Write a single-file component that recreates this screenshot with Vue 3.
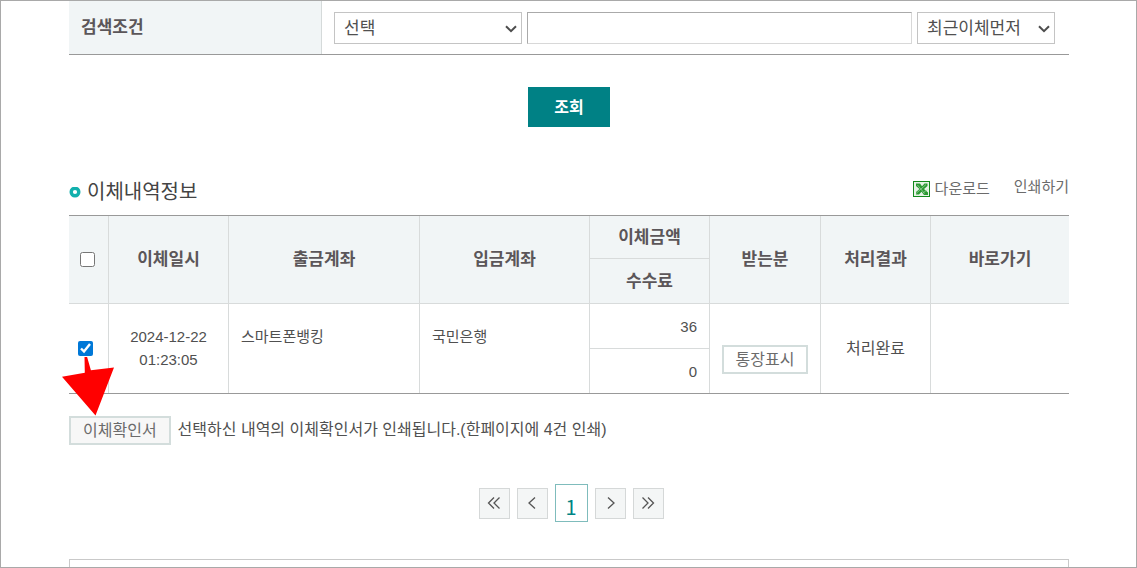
<script setup>
import { ref } from 'vue'

const allChecked = ref(false)
const searchType = ref('선택')
const sortOrder = ref('최근이체먼저')
const keyword = ref('')
const transfers = ref([
  {
    id: 1,
    checked: true,
    date: '2024-12-22',
    time: '01:23:05',
    from: '스마트폰뱅킹',
    to: '국민은행',
    amount: '36',
    fee: '0',
    result: '처리완료'
  }
])
</script>

<template>
  <main class="page">
    <form class="search" @submit.prevent>
      <div class="condition">
        <label class="condition-name" for="search-type">검색조건</label>
        <div class="controls">
          <span class="select type">
            <select id="search-type" v-model="searchType">
              <option>선택</option>
            </select>
            <svg class="chevron" viewBox="0 0 12 8" aria-hidden="true"><path d="M1 1.2 6 6.2 11 1.2" /></svg>
          </span>
          <input v-model="keyword" class="keyword" type="text" aria-label="검색어" />
          <span class="select sort">
            <select v-model="sortOrder" aria-label="정렬">
              <option>최근이체먼저</option>
            </select>
            <svg class="chevron" viewBox="0 0 12 8" aria-hidden="true"><path d="M1 1.2 6 6.2 11 1.2" /></svg>
          </span>
        </div>
      </div>
      <button class="submit" type="submit">조회</button>
    </form>

    <section class="history">
      <header class="history-head">
        <h2>
          <svg class="ring" viewBox="0 0 12 12" aria-hidden="true"><circle cx="6" cy="5" r="3.8" /></svg>
          이체내역정보
        </h2>
        <nav class="tools">
          <a class="download" href="#">
            <svg class="excel" viewBox="0 0 17 16" aria-hidden="true">
              <rect x="0.5" y="0.5" width="16" height="15" fill="#e6f3e6" stroke="#12891b" />
              <path d="M3 2.500h4l2 2.800L11.500 2.500H14.500V5L11 8l4 3.500V14h-4L8.500 10.800 6 13.500H3V11l3.500-3L3 5z" fill="#2b9a32" />
              <path d="M10 12l4.500-3.500M3 12.500l10-9M4.500 4l7 8.500" stroke="#a5d6a7" stroke-width="0.7" fill="none" />
            </svg>
            다운로드
          </a>
          <a class="print" href="#">인쇄하기</a>
        </nav>
      </header>

      <table>
        <colgroup>
          <col class="c-check" /><col class="c-date" /><col class="c-from" /><col class="c-to" />
          <col class="c-amount" /><col class="c-receiver" /><col class="c-result" /><col />
        </colgroup>
        <thead>
          <tr class="upper">
            <th class="check" rowspan="2"><input v-model="allChecked" type="checkbox" aria-label="전체 선택" /></th>
            <th rowspan="2">이체일시</th>
            <th rowspan="2">출금계좌</th>
            <th rowspan="2">입금계좌</th>
            <th>이체금액</th>
            <th rowspan="2">받는분</th>
            <th rowspan="2">처리결과</th>
            <th rowspan="2">바로가기</th>
          </tr>
          <tr><th class="inner">수수료</th></tr>
        </thead>
        <tbody v-for="t in transfers" :key="t.id">
          <tr class="item">
            <td class="check picked" rowspan="2">
              <input v-model="t.checked" type="checkbox" aria-label="이체내역 선택" />
              <svg class="arrow" viewBox="0 0 53 60" aria-hidden="true">
                <path d="M22.500 1h2.600l3.800 13.300L52 11.500 33.500 59.500 0 20.700l22.800-4z" />
              </svg>
            </td>
            <td class="date" rowspan="2">{{ t.date }}<br />{{ t.time }}</td>
            <td class="account" rowspan="2">{{ t.from }}</td>
            <td class="account" rowspan="2">{{ t.to }}</td>
            <td class="number">{{ t.amount }}</td>
            <td class="receiver" rowspan="2"><button class="plain" type="button">통장표시</button></td>
            <td class="result" rowspan="2">{{ t.result }}</td>
            <td rowspan="2"></td>
          </tr>
          <tr><td class="number inner">{{ t.fee }}</td></tr>
        </tbody>
      </table>

      <div class="confirm">
        <button class="plain grey" type="button">이체확인서</button>
        <p>선택하신 내역의 이체확인서가 인쇄됩니다.(한페이지에 4건 인쇄)</p>
      </div>
    </section>

    <nav class="pages" aria-label="페이지">
      <button type="button" aria-label="처음">
        <svg viewBox="0 0 14 14"><path d="M7 1.500 1.500 7 7 12.500M12.500 1.500 7 7l5.500 5.500" /></svg>
      </button>
      <button type="button" aria-label="이전">
        <svg viewBox="0 0 14 14"><path d="M10 1.500 4 7l6 5.500" /></svg>
      </button>
      <a class="current" href="#" aria-current="page">1</a>
      <button type="button" aria-label="다음">
        <svg viewBox="0 0 14 14"><path d="M5 1.500 11 7 5 12.500" /></svg>
      </button>
      <button type="button" aria-label="마지막">
        <svg viewBox="0 0 14 14"><path d="M1.500 1.500 7 7l-5.500 5.500M7 1.500 12.500 7 7 12.500" /></svg>
      </button>
    </nav>

    <div class="notice"></div>
  </main>
</template>

<style>
body {
  background: #fff;
}
</style>

<style scoped>
.page,
.page * {
  box-sizing: border-box;
}
.page {
  display: flex;
  flex-direction: column;
  min-height: 100vh;
  padding: 0 67px 0 68px;
  border: 1px solid #a9a9a9;
  color: #505050;
  font-family: "Liberation Sans", "Noto Sans CJK KR", sans-serif;
  font-size: 16px;
  line-height: 23px;
}
button,
input,
select {
  font: inherit;
  color: inherit;
  margin: 0;
}
a {
  color: inherit;
  text-decoration: none;
}
.search {
  display: flex;
  flex-direction: column;
  align-items: center;
}
.condition {
  display: flex;
  align-self: stretch;
  border-bottom: 1px solid #999;
}
.condition-name {
  display: flex;
  align-items: center;
  width: 253px;
  padding-left: 12px;
  background: #f1f5f6;
  border-right: 1px solid #d5dada;
  color: #5b5659;
  font-size: 17px;
  font-weight: 700;
}
.controls {
  display: flex;
  flex: 1;
  gap: 5px;
  padding: 11px 14px 10px 12px;
  font-size: 17px;
}
.select {
  position: relative;
}
.type {
  width: 188px;
}
.sort {
  width: 138px;
}
select {
  display: block;
  width: 100%;
  height: 32px;
  padding: 0 9px;
  appearance: none;
  background: #fff;
  border: 1px solid #c4c4c4;
  border-radius: 0;
}
.chevron {
  position: absolute;
  top: 13px;
  right: 5px;
  width: 12px;
  height: 8px;
  fill: none;
  stroke: #4d4d4d;
  stroke-width: 2;
  pointer-events: none;
}
.keyword {
  flex: 1;
  min-width: 0;
  height: 32px;
  padding: 0 8px;
  background: #fff;
  border: 1px solid;
  border-color: #aaa #d8d8d8 #d8d8d8 #aaa;
}
.submit {
  width: 82px;
  height: 40px;
  margin-top: 32px;
  padding: 0;
  background: #008185;
  border: 0;
  color: #fff;
  font-weight: 700;
}
.history-head {
  display: flex;
  align-items: flex-end;
  justify-content: space-between;
  height: 88px;
  padding-bottom: 11px;
}
h2 {
  display: flex;
  align-items: center;
  gap: 6px;
  margin: 0;
  color: #444;
  font-size: 20px;
  font-weight: 400;
}
.ring {
  width: 12px;
  height: 12px;
  fill: #fff;
  stroke: #12b0ad;
  stroke-width: 3.4;
}
.tools {
  display: flex;
  align-items: flex-start;
  gap: 24px;
  color: #6b6b6b;
  font-size: 15px;
}
.download {
  display: flex;
  align-items: center;
  gap: 5px;
  padding: 2px 0 4px;
}
.excel {
  width: 17px;
  height: 16px;
}
table {
  width: 100%;
  table-layout: fixed;
  border-collapse: separate;
  border-spacing: 0;
  border-top: 1px solid #999;
  border-bottom: 1px solid #999;
}
.c-check { width: 40px; }
.c-date { width: 120px; }
.c-from { width: 191px; }
.c-to { width: 170px; }
.c-amount { width: 120px; }
.c-receiver { width: 111px; }
.c-result { width: 110px; }
tr {
  height: 45px;
}
.upper {
  height: 43px;
}
.item {
  height: 44px;
}
th,
td {
  padding: 0;
  border-right: 1px solid #d8dbdb;
  text-align: center;
}
th:last-child:not(.inner),
td:last-child:not(.inner) {
  border-right: 0;
}
th {
  background: #f1f5f6;
  border-bottom: 1px solid #d8dbdb;
  color: #5b5659;
  font-size: 17px;
  font-weight: 700;
}
td {
  font-size: 15px;
}
td.inner {
  border-top: 1px solid #d8dbdb;
}
input[type="checkbox"] {
  display: block;
  width: 15px;
  height: 15px;
  margin: 0 auto;
  accent-color: #0078d7;
}
th.check {
  padding-right: 2px;
}
td.picked {
  position: relative;
  padding-right: 6px;
}
.arrow {
  position: absolute;
  top: 52px;
  left: -7px;
  width: 53px;
  height: 60px;
  fill: #f00;
  pointer-events: none;
}
td.date {
  padding-bottom: 2px;
}
td.account {
  padding: 21px 12px 0;
  text-align: left;
  vertical-align: top;
}
td.number {
  padding-right: 12px;
  text-align: right;
}
td.receiver {
  padding-top: 22px;
}
td.result {
  font-size: 16px;
}
.plain {
  height: 29px;
  padding: 0 12px;
  background: #fff;
  border: 2px solid #d3dddc;
  color: #6b6b6b;
  font-size: 16px;
  line-height: 23px;
}
.grey {
  background: #f7f7f7;
}
.confirm {
  display: flex;
  gap: 7px;
  margin-top: 22px;
}
.confirm p {
  margin: 2px 0;
}
.pages {
  display: flex;
  align-items: center;
  justify-content: center;
  gap: 7px;
  margin: 39px 0 37px;
  padding-left: 4px;
}
.pages button {
  display: flex;
  align-items: center;
  justify-content: center;
  width: 31px;
  height: 31px;
  padding: 0;
  background: #f4f6f6;
  border: 1px solid #d5d8d8;
}
.pages svg {
  width: 14px;
  height: 14px;
  fill: none;
  stroke: #555;
  stroke-width: 1.3;
}
.current {
  width: 33px;
  height: 38px;
  padding-top: 10px;
  border: 1px solid #7fbcbc;
  color: #008485;
  font-family: "Noto Sans CJK KR", sans-serif;
  font-size: 20px;
  text-align: center;
}
.notice {
  flex: 1;
  min-height: 8px;
  border: 1px solid #c9c9c9;
  border-bottom: 0;
}
</style>
